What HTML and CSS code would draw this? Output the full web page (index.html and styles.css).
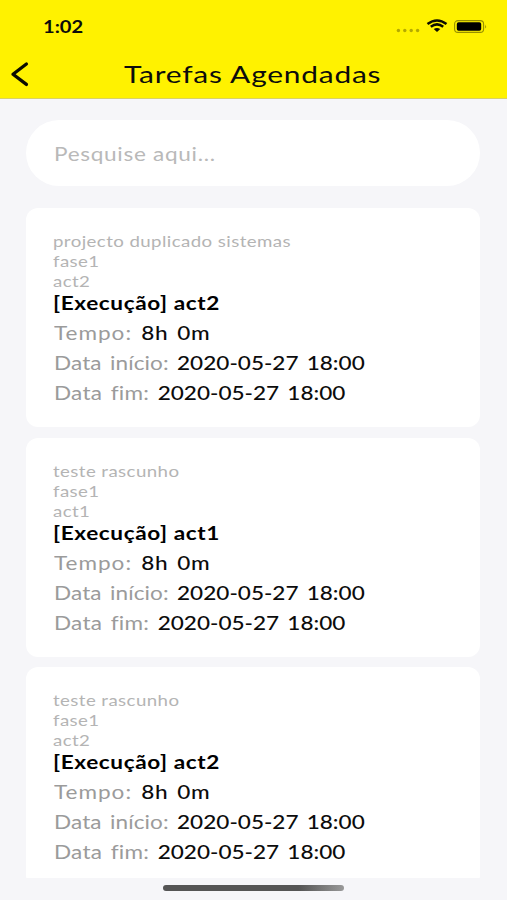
FILE: index.html
```html
<!DOCTYPE html>
<html lang="pt">
<head>
<meta charset="utf-8">
<title>Tarefas Agendadas</title>
<link rel="stylesheet" href="styles.css">
</head>
<body>
<header class="header">
  <div class="status">
    <span class="time wide">1:02</span>
    <svg class="status-icons" width="92" height="20" viewBox="0 0 92 20">
      <g fill="#b5aa00"><circle cx="3.4" cy="13.5" r="1.7"/><circle cx="9.8" cy="13.5" r="1.7"/><circle cx="16.2" cy="13.5" r="1.7"/><circle cx="22.6" cy="13.5" r="1.7"/></g>
      <g fill="none" stroke="#0c0c00" stroke-width="2.5"><path d="M32.5 7Q42 -.1 51.5 7"/><path d="M35.8 9.8Q42 5 48.2 9.8"/></g>
      <path d="M38.7 12.1Q42 9.8 45.3 12.1L42 15z" fill="#0c0c00"/>
      <rect x="59.6" y="3.6" width="29" height="11.8" rx="3.4" fill="none" stroke="#978f00" stroke-width="1.1"/>
      <rect x="61.8" y="5.3" width="24.4" height="8.4" rx="1.8" fill="#000"/>
      <path d="M90.2 7.5q1.7 2 0 4z" fill="#978f00"/>
    </svg>
  </div>
  <div class="nav">
    <svg class="back" width="20" height="28" viewBox="0 0 20 28"><path d="M16.4 4 3 14.2 16.4 24.4" fill="none" stroke="#0b0b00" stroke-width="3.3" stroke-linecap="round" stroke-linejoin="round"/></svg>
    <h1 class="title"><span class="wide">Tarefas Agendadas</span></h1>
  </div>
</header>
<main class="content">
  <div class="search"><span class="wide">Pesquise aqui...</span></div>
  <section class="list">
    <article class="card">
      <p class="meta"><span class="wide">projecto duplicado sistemas</span></p>
      <p class="meta"><span class="wide">fase1</span></p>
      <p class="meta"><span class="wide">act2</span></p>
      <h2 class="task"><span class="wide">[Execução] act2</span></h2>
      <p class="row duration"><span class="wide">Tempo: <b>8h 0m</b></span></p>
      <p class="row start"><span class="wide">Data início: <b>2020-05-27 18:00</b></span></p>
      <p class="row"><span class="wide">Data fim: <b>2020-05-27 18:00</b></span></p>
    </article>
    <article class="card">
      <p class="meta"><span class="wide">teste rascunho</span></p>
      <p class="meta"><span class="wide">fase1</span></p>
      <p class="meta"><span class="wide">act1</span></p>
      <h2 class="task"><span class="wide">[Execução] act1</span></h2>
      <p class="row duration"><span class="wide">Tempo: <b>8h 0m</b></span></p>
      <p class="row start"><span class="wide">Data início: <b>2020-05-27 18:00</b></span></p>
      <p class="row"><span class="wide">Data fim: <b>2020-05-27 18:00</b></span></p>
    </article>
    <article class="card">
      <p class="meta"><span class="wide">teste rascunho</span></p>
      <p class="meta"><span class="wide">fase1</span></p>
      <p class="meta"><span class="wide">act2</span></p>
      <h2 class="task"><span class="wide">[Execução] act2</span></h2>
      <p class="row duration"><span class="wide">Tempo: <b>8h 0m</b></span></p>
      <p class="row start"><span class="wide">Data início: <b>2020-05-27 18:00</b></span></p>
      <p class="row"><span class="wide">Data fim: <b>2020-05-27 18:00</b></span></p>
    </article>
  </section>
</main>
<footer class="footer"><div class="home"></div></footer>
</body>
</html>
```

FILE: styles.css
```css
* { box-sizing: border-box; margin: 0; padding: 0; }
body {
  width: 507px;
  height: 900px;
  overflow: hidden;
  display: flex;
  flex-direction: column;
  background: #f6f6f9;
  font-family: Lato, "Open Sans", sans-serif;
  font-variant-ligatures: none;
  color: #0c0c0c;
}
.wide {
  display: inline-block;
  white-space: pre;
  transform: scaleX(1.22);
  transform-origin: left center;
}
.header {
  flex: none;
  height: 99px;
  background: #fff200;
  border-bottom: 1px solid #d9d166;
}
.status {
  height: 50px;
  padding: 17px 20px 0 42.5px;
  display: flex;
  justify-content: space-between;
}
.time { font-size: 16.5px; line-height: 20px; font-weight: 700; }
.nav { height: 48px; display: flex; align-items: center; padding-left: 10px; }
.back { flex: none; }
.title { flex: 1; padding-left: 94px; font-size: 23px; line-height: 30px; font-weight: 400; }
.title .wide { transform: scaleX(1.3); letter-spacing: 0.6px; }
.content { flex: none; height: 779px; overflow: hidden; padding: 21px 27px 0 26px; }
.search {
  height: 66px;
  border-radius: 33px;
  background: #fff;
  padding-left: 28px;
  font-size: 18.5px;
  line-height: 68px;
  letter-spacing: 0.57px;
  color: #b9b9b9;
}
.list { margin-top: 22px; display: flex; flex-direction: column; gap: 10.5px; }
.card { height: 219.2px; flex: none; border-radius: 12px; background: #fff; padding: 23px 0 0 27px; }
.meta { font-size: 15.3px; line-height: 20px; height: 20px; letter-spacing: 0.34px; color: #b4b4b4; }
.task { font-size: 18.5px; line-height: 24px; height: 27px; font-weight: 700; letter-spacing: 0.5px; color: #000; }
.row { font-size: 18.5px; line-height: 30px; height: 30px; padding-left: 1px; letter-spacing: 0.2px; word-spacing: 2px; color: #9b9b9b; }
.row b { font-weight: 500; letter-spacing: 0; color: #0c0c0c; }
.duration { letter-spacing: 0.8px; }
.duration b { letter-spacing: 0.6px; }
.start { letter-spacing: 0.08px; }
.footer { flex: 1; display: flex; justify-content: center; padding-top: 7px; }
.home { width: 181px; height: 6px; border-radius: 3px; background: linear-gradient(90deg, #555 75%, #999); }
```
